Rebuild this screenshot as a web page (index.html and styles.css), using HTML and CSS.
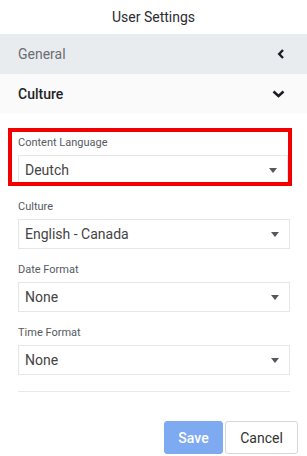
FILE: index.html
```html
<!DOCTYPE html>
<html>
<head>
<meta charset="utf-8">
<link rel="stylesheet" href="styles.css">
</head>
<body>
<div class="panel">
  <div class="title">User Settings</div>
  <div class="section section-general">
    <span>General</span>
    <svg class="chev chev-left" width="8" height="10" viewBox="0 0 8 10"><path d="M6 1 L2.2 5 L6 9" fill="none" stroke="#1c1c28" stroke-width="2.4"/></svg>
  </div>
  <div class="section section-culture">
    <span>Culture</span>
    <svg class="chev" width="13" height="8" viewBox="0 0 13 8"><path d="M1.5 1.5 L6.5 6 L11.5 1.5" fill="none" stroke="#1c1c28" stroke-width="2.5"/></svg>
  </div>
  <div class="form">
    <div class="highlight">
      <div class="group">
        <label class="label">Content Language</label>
        <div class="select"><span>Deutch</span><span class="caret"></span></div>
      </div>
    </div>
    <div class="group">
      <label class="label">Culture</label>
      <div class="select"><span>English - Canada</span><span class="caret"></span></div>
    </div>
    <div class="group">
      <label class="label">Date Format</label>
      <div class="select"><span>None</span><span class="caret"></span></div>
    </div>
    <div class="group">
      <label class="label">Time Format</label>
      <div class="select"><span>None</span><span class="caret"></span></div>
    </div>
    <div class="divider"></div>
    <div class="actions">
      <button class="btn btn-save">Save</button>
      <button class="btn btn-cancel">Cancel</button>
    </div>
  </div>
</div>
</body>
</html>
```
FILE: styles.css
```css
* { box-sizing: border-box; }
html, body { margin: 0; padding: 0; background: #fff; }
body { font-family: Roboto, "Liberation Sans", sans-serif; color: #333; }
.panel { width: 307px; }
.title { height: 34px; display: flex; align-items: center; justify-content: center; font-size: 14px; color: #2b2b33; }
.section { height: 40px; display: flex; align-items: center; justify-content: space-between; padding: 0 22px 0 18px; font-size: 14px; }
.section-general { background: #e9ecef; color: #6b6d72; }
.section-culture { background: #fafafa; color: #1f1f27; font-weight: 500; height: 39px; }
.chev { display: block; }
.chev-left { margin-right: 0; }
.form { padding: 0 17px 0 18px; }
.highlight { margin: 15px -2px 0 -10px; border: 4px solid #f20000; padding: 0 0 0 6px; height: 58px; overflow: hidden; }
.highlight .group { margin-top: 0; }
.highlight .label { padding-top: 4px; }
.group { margin-top: 14px; }
.label { display: block; font-size: 11px; line-height: 14px; color: #555a60; margin-bottom: 5px; }
.select { height: 30px; border: 1px solid #e6e6e6; display: flex; align-items: center; justify-content: space-between; padding: 0 10px 0 6px; font-size: 14px; color: #444; }
.caret { width: 0; height: 0; border-left: 4.5px solid transparent; border-right: 4.5px solid transparent; border-top: 5px solid #55575e; }
.divider { height: 1px; background: #e8e8ee; margin-top: 16px; }
.actions { display: flex; justify-content: flex-end; gap: 2px; margin-top: 29px; margin-right: -9px; padding-right: 1px; }
.btn { height: 33px; font-family: inherit; font-size: 14px; border-radius: 3px; padding: 0; }
.btn-save { width: 59px; background: #7daaf0; border: 1px solid #7daaf0; color: #fff; font-weight: 500; }
.btn-cancel { width: 73px; background: #fff; border: 1px solid #d6d6d6; color: #333; }
```
